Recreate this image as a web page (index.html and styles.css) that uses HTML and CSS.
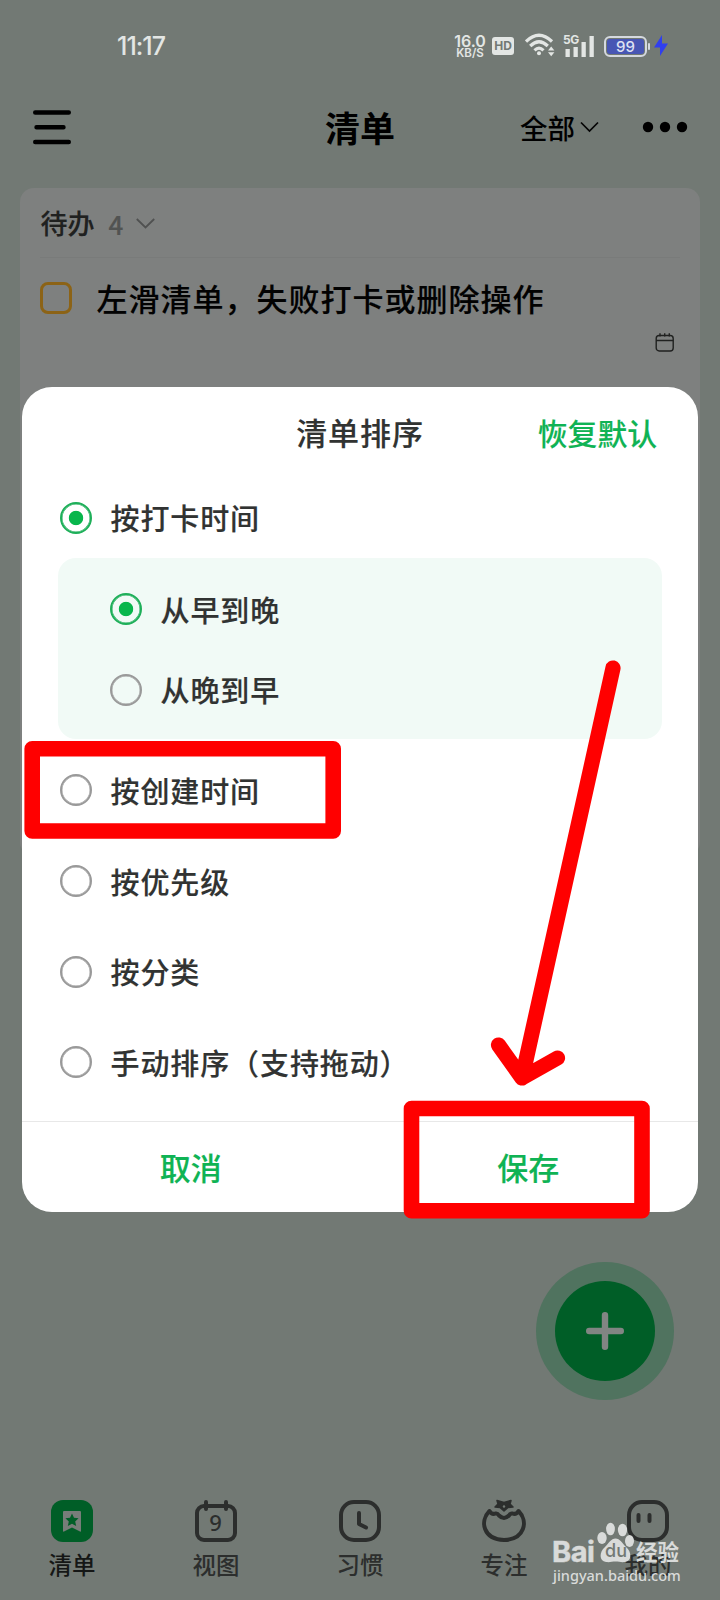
FILE: index.html
```html
<!DOCTYPE html>
<html lang="zh-CN">
<head>
<meta charset="utf-8">
<title>清单</title>
<link rel="stylesheet" href="styles.css">
</head>
<body>
<div class="screen">
  <header class="status">
    <span class="clock">11:17</span>
    <div class="indicators">
      <div class="rate"><span class="rate-value">16.0</span><span class="rate-unit">KB/S</span></div>
      <span class="hd">HD</span>
      <svg class="wifi" width="30" height="24" viewBox="0 0 30 24" fill="none" stroke="#e3e6e4" stroke-width="3.2">
        <path d="M1 8.500Q14 -4 27 8.500M5.200 13Q14 4.500 22.800 13M9.500 17.300Q14 13 18.500 17.300"/>
        <circle cx="14" cy="20.300" r="2" fill="#e3e6e4" stroke="none"/>
        <path d="M23 17.500l3.200-4 3.200 4zM23 19.200l3.200 4 3.200-4z" fill="#e3e6e4" stroke="none"/>
      </svg>
      <div class="cell">
        <span class="gen">5G</span>
        <svg width="31" height="22" viewBox="0 0 31 22" fill="#e3e6e4"><path d="M2.500 14h4.300v8H2.500zM10.500 12h4.300v10h-4.300zM18.500 7h4.300v15h-4.300zM26.500 1h4.300v21h-4.300z"/></svg>
      </div>
      <div class="battery"><span class="level">99</span></div>
      <svg class="bolt" width="14" height="22" viewBox="0 0 14 22"><path d="M8 0L0 12.500H6L6 21L14 8.500H8Z" fill="#303fee"/></svg>
    </div>
  </header>

  <div class="topbar">
    <svg width="38" height="36" viewBox="0 0 38 36" stroke="#000" stroke-width="4.400" stroke-linecap="round"><path d="M2.200 3.500H35.800M3.500 18.200H30.500M2.200 33H35.800"/></svg>
    <h1 class="title">清单</h1>
    <div class="filter">
      <span>全部</span>
      <svg width="19" height="12" viewBox="0 0 19 12" fill="none" stroke="#050505" stroke-width="1.700"><path d="M1 1.500L9.500 10L18 1.500"/></svg>
    </div>
    <svg width="46" height="12" viewBox="0 0 46 12"><circle cx="6" cy="6" r="5.200"/><circle cx="23" cy="6" r="5.200"/><circle cx="40" cy="6" r="5.200"/></svg>
  </div>

  <main class="card">
    <div class="group">
      <span class="group-name">待办</span>
      <span class="count">4</span>
      <svg width="19" height="12" viewBox="0 0 19 12" fill="none" stroke="#505151" stroke-width="1.800"><path d="M.8 1L9.500 9.500L18.200 1"/></svg>
    </div>
    <div class="task">
      <span class="checkbox"></span>
      <span class="task-name">左滑清单，失败打卡或删除操作</span>
    </div>
    <svg class="cal" width="20" height="21" viewBox="0 0 20 21" fill="none" stroke="#202120" stroke-width="1.400"><rect x="1.200" y="3.500" width="17" height="15.500" rx="3"/><path d="M1.200 8.500H18.200M5 1.200V4.500M9.700 1.200V4.500M14.300 1.200V4.500"/></svg>
  </main>

  <div class="fab"><div class="fab-core">
    <svg width="38" height="38" viewBox="0 0 38 38" stroke="#818583" stroke-width="6.400" stroke-linecap="round"><path d="M3.200 19H34.800M19 3.200V34.800"/></svg>
  </div></div>

  <nav class="tabs">
    <div class="tab active">
      <svg width="44" height="44" viewBox="0 0 44 44"><rect x="1" y="1" width="42" height="42" rx="12" fill="#005e27"/><path d="M13 13q0-1 1-1H30q1 0 1 1V32q0 1-1 .5L22 28.500L14 32.500q-1 .5-1-.5Z" fill="#777d79"/><path d="M22 14.500l2 4.300 4.600.500-3.400 3.200 1 4.600-4.200-2.300-4.200 2.300 1-4.600-3.400-3.200 4.600-.500Z" fill="#005e27"/></svg>
      <span>清单</span>
    </div>
    <div class="tab">
      <svg width="44" height="44" viewBox="0 0 44 44" fill="none" stroke="#2c2e2d" stroke-width="4"><rect x="3" y="7" width="38" height="34" rx="7"/><path d="M12 3V10M32 3V10" stroke-linecap="round"/><text class="day" x="21.500" y="31.800" text-anchor="middle">9</text></svg>
      <span>视图</span>
    </div>
    <div class="tab">
      <svg width="44" height="44" viewBox="0 0 44 44" fill="none" stroke="#2c2e2d" stroke-width="4"><rect x="3" y="3" width="38" height="38" rx="13"/><path d="M21 14V25L28 28.500" stroke-linecap="round" stroke-linejoin="round"/></svg>
      <span>习惯</span>
    </div>
    <div class="tab">
      <svg width="46" height="44" viewBox="0 0 46 44" fill="none" stroke="#2c2e2d" stroke-width="4" stroke-linejoin="round"><path d="M8.500 12C-1.500 22 2 40.500 23 41C44 40.500 47.500 22 37.500 12C36 14.500 34 15.500 31.500 14.500Q29.500 14 28 16.500Q23 21.500 18 16.500Q16.500 14 14.500 14.500C12 15.500 10 14.500 8.500 12Z" /><path d="M23 3.500L30 1.500L29 5L32 8L27 8.500L23 12L19 8.500L14 8L17 5L16 1.500Z" fill="#2c2e2d" stroke-width="1.500"/><circle cx="23" cy="7.500" r="1.200" fill="#727974" stroke="none"/></svg>
      <span>专注</span>
    </div>
    <div class="tab">
      <svg width="44" height="44" viewBox="0 0 44 44" fill="none" stroke="#2c2e2d" stroke-width="4"><rect x="3" y="3" width="38" height="38" rx="13"/><path d="M12.500 16V22M23.500 16V22" stroke-linecap="round"/></svg>
      <span>我的</span>
    </div>
  </nav>

  <section class="dialog">
    <div class="dialog-head"><h2 class="dialog-title">清单排序</h2><span class="reset">恢复默认</span></div>
    <div class="option"><span class="radio on"></span><span class="label">按打卡时间</span></div>
    <div class="panel">
      <div class="option"><span class="radio on"></span><span class="label">从早到晚</span></div>
      <div class="option"><span class="radio"></span><span class="label">从晚到早</span></div>
    </div>
    <div class="option-list">
      <div class="option"><span class="radio"></span><span class="label">按创建时间</span></div>
      <div class="option"><span class="radio"></span><span class="label">按优先级</span></div>
      <div class="option"><span class="radio"></span><span class="label">按分类</span></div>
      <div class="option"><span class="radio"></span><span class="label">手动排序（支持拖动）</span></div>
    </div>
    <footer class="actions"><span>取消</span><span>保存</span></footer>
  </section>

  <svg class="marks" width="720" height="1600" viewBox="0 0 720 1600" fill="none" stroke="#f00">
    <rect x="32.200" y="748.700" width="301" height="82.300" stroke-width="15.600" stroke-linejoin="round"/>
    <rect x="411.500" y="1108.500" width="230.500" height="102.300" stroke-width="15.600" stroke-linejoin="round"/>
    <path d="M613 668L522 1078M498.500 1045L522 1078L557.500 1058" stroke-width="15.200" stroke-linecap="round" stroke-linejoin="round"/>
  </svg>

  <div class="watermark">
    <div class="brand">
      <span class="bai">Bai</span>
      <span class="paw">
        <svg width="38" height="42" viewBox="0 0 38 42" fill="#d9dbda"><ellipse cx="6" cy="17" rx="4.700" ry="6"/><ellipse cx="14.500" cy="8" rx="4.400" ry="6.300"/><ellipse cx="26.500" cy="9" rx="4.600" ry="6.300"/><ellipse cx="33.500" cy="20" rx="4.500" ry="6"/><path d="M19.500 17.500C24 17.500 26 22 30 26C36 31 36 40 29 41C25 41.500 23 40.500 19.500 40.500C16 40.500 14 41.500 10 41C3 40 3 31 9 26C13 22 15 17.500 19.500 17.500Z"/></svg>
        <span class="du">du</span>
      </span>
      <span class="jy">经验</span>
    </div>
    <span class="url">jingyan.baidu.com</span>
  </div>
</div>
</body>
</html>
```
FILE: styles.css
```css
* { box-sizing: border-box; }
body { margin: 0; font-family: "Noto Sans CJK SC", sans-serif; font-weight: 500; }
svg { display: block; flex: none; }
h1, h2 { margin: 0; }
.screen { position: relative; width: 720px; height: 1600px; overflow: hidden; background: #727974; display: flex; flex-direction: column; }

.status { height: 92px; padding: 0 52px 0 117px; display: flex; align-items: center; justify-content: space-between; color: #e3e6e4; font-family: Inter, sans-serif; }
.clock { font-size: 25px; letter-spacing: -1px; line-height: 28px; }
.indicators { display: flex; align-items: center; height: 28px; }
.rate { width: 32px; display: flex; flex-direction: column; align-items: center; font-weight: 600; white-space: nowrap; }
.rate-value { font-size: 16px; line-height: 14px; }
.rate-unit { font-size: 11.500px; line-height: 11px; }
.hd { width: 22px; height: 18px; margin-left: 6px; border-radius: 3px; background: #e3e6e4; color: #727974; font-size: 12px; line-height: 18px; font-weight: 700; text-align: center; }
.wifi { margin-left: 11px; margin-top: -2px; }
.cell { position: relative; margin-left: 8px; }
.gen { position: absolute; left: 0; top: -2px; font-size: 12px; line-height: 14px; font-weight: 700; letter-spacing: -.5px; }
.battery { position: relative; width: 43px; height: 21px; margin-left: 10px; border: 2px solid #d5d9df; border-radius: 6px; padding: 1px; }
.battery::after { content: ""; position: absolute; right: -5px; top: 5px; width: 2px; height: 7px; background: #d5d9df; border-radius: 1px; }
.level { display: block; height: 15px; border-radius: 3px; background: #4856b4; color: #dfe2f2; font-size: 15px; line-height: 16px; text-align: center; }
.bolt { margin-left: 7px; }

.topbar { height: 96px; padding: 0 32px 26px 33px; display: flex; align-items: center; white-space: nowrap; }
.title { margin-left: 254px; font-size: 35px; line-height: 50px; font-weight: 700; }
.filter { display: flex; align-items: center; gap: 5px; margin-left: auto; margin-right: 43px; font-size: 27.500px; line-height: 40px; }

.card { width: 680px; height: 668px; margin-left: 20px; border-radius: 14px; background: #7e807f; padding: 0 20px; }
.group { height: 70px; display: flex; align-items: center; border-bottom: 1px solid #797b7a; color: #202120; font-size: 27px; }
.group-name { margin-top: 0; margin-left: .500px; -webkit-text-stroke: .15px; }
.count { margin: 1px 13px 0 14px; color: #515352; font-size: 26px; -webkit-text-stroke: .2px; }
.group svg { margin-top: 2px; }
.task { display: flex; align-items: center; height: 80px; gap: 24.500px; }
.checkbox { width: 32px; height: 32px; border: 3px solid #8c6316; border-radius: 8px; }
.task-name { margin-top: -2px; font-size: 31px; letter-spacing: 1px; white-space: nowrap; color: #020202; -webkit-text-stroke: .15px; }
.cal { margin: -6px 5px 0 auto; }

.fab { width: 138px; height: 138px; margin: 406px 46px 0 auto; border-radius: 50%; background: #50735f; display: grid; place-items: center; }
.fab-core { width: 100px; height: 100px; border-radius: 50%; background: #005e27; display: grid; place-items: center; }

.tabs { margin-top: 99px; display: grid; grid-template-columns: repeat(5, 1fr); }
.tab { display: flex; flex-direction: column; align-items: center; gap: 4px; color: #2c2e2d; font-size: 23.500px; line-height: 34px; }
.active { color: #151716; }
.day { font: 500 22px "Noto Sans", sans-serif; fill: #2c2e2d; stroke: none; }

.dialog { position: absolute; left: 22px; top: 387px; width: 676px; height: 825px; border-radius: 30px; background: #fff; color: #313332; display: flex; flex-direction: column; -webkit-text-stroke: .15px; }
.dialog-head { height: 85px; padding: 5px 41px 0 0; display: grid; grid-template-columns: 1fr auto 1fr; align-items: center; }
.dialog-title { grid-column: 2; font-size: 31px; letter-spacing: .900px; font-weight: 500; line-height: 44px; margin-right: -41px; white-space: nowrap; }
.reset { justify-self: end; color: #0fb354; font-size: 29.800px; line-height: 44px; }
.option { height: 91px; padding-left: 38px; display: flex; align-items: center; gap: 18.500px; font-size: 29px; letter-spacing: .900px; }
.label { margin-top: -1px; }
.radio { flex: none; width: 32px; height: 32px; border: 2.500px solid #999; border-radius: 50%; box-shadow: inset 0 0 0 .400px #999; }
.on { border-color: #1eaf59; box-shadow: inset 0 0 0 .500px #1eaf59; background: radial-gradient(circle, #08b64c 6.800px, transparent 7.600px); }
.panel { margin: -5px 36px 0; height: 181px; border-radius: 18px; background: #f1faf6; padding: 11px 0 0 14px; }
.panel .option { height: 80.500px; }
.option-list { margin-top: 6px; }
.option-list .option { height: 90.700px; }
.actions { margin-top: auto; height: 91px; border-top: 1px solid #e8e8e8; display: grid; grid-template-columns: 1fr 1fr; align-items: center; text-align: center; color: #0fb354; font-size: 31px; padding: 0 1px 2px 0; }

.marks { position: absolute; left: 0; top: 0; }

.watermark { position: absolute; left: 552px; top: 1521px; color: #d9dbda; }
.brand { display: flex; height: 42px; align-items: flex-end; white-space: nowrap; }
.bai { width: 44px; font: 700 29px/31px Inter, sans-serif; letter-spacing: -.5px; margin-bottom: -4px; -webkit-text-stroke: .5px; }
.paw { position: relative; width: 40px; }
.du { position: absolute; left: 9px; top: 20px; font: 500 18px/20px Inter, sans-serif; color: #727974; }
.jy { font-size: 21.500px; line-height: 24px; font-weight: 700; margin-bottom: 0; }
.url { display: block; margin: 1px 0 0 1px; font: 500 14.500px/22px "Noto Sans", sans-serif; }
```
